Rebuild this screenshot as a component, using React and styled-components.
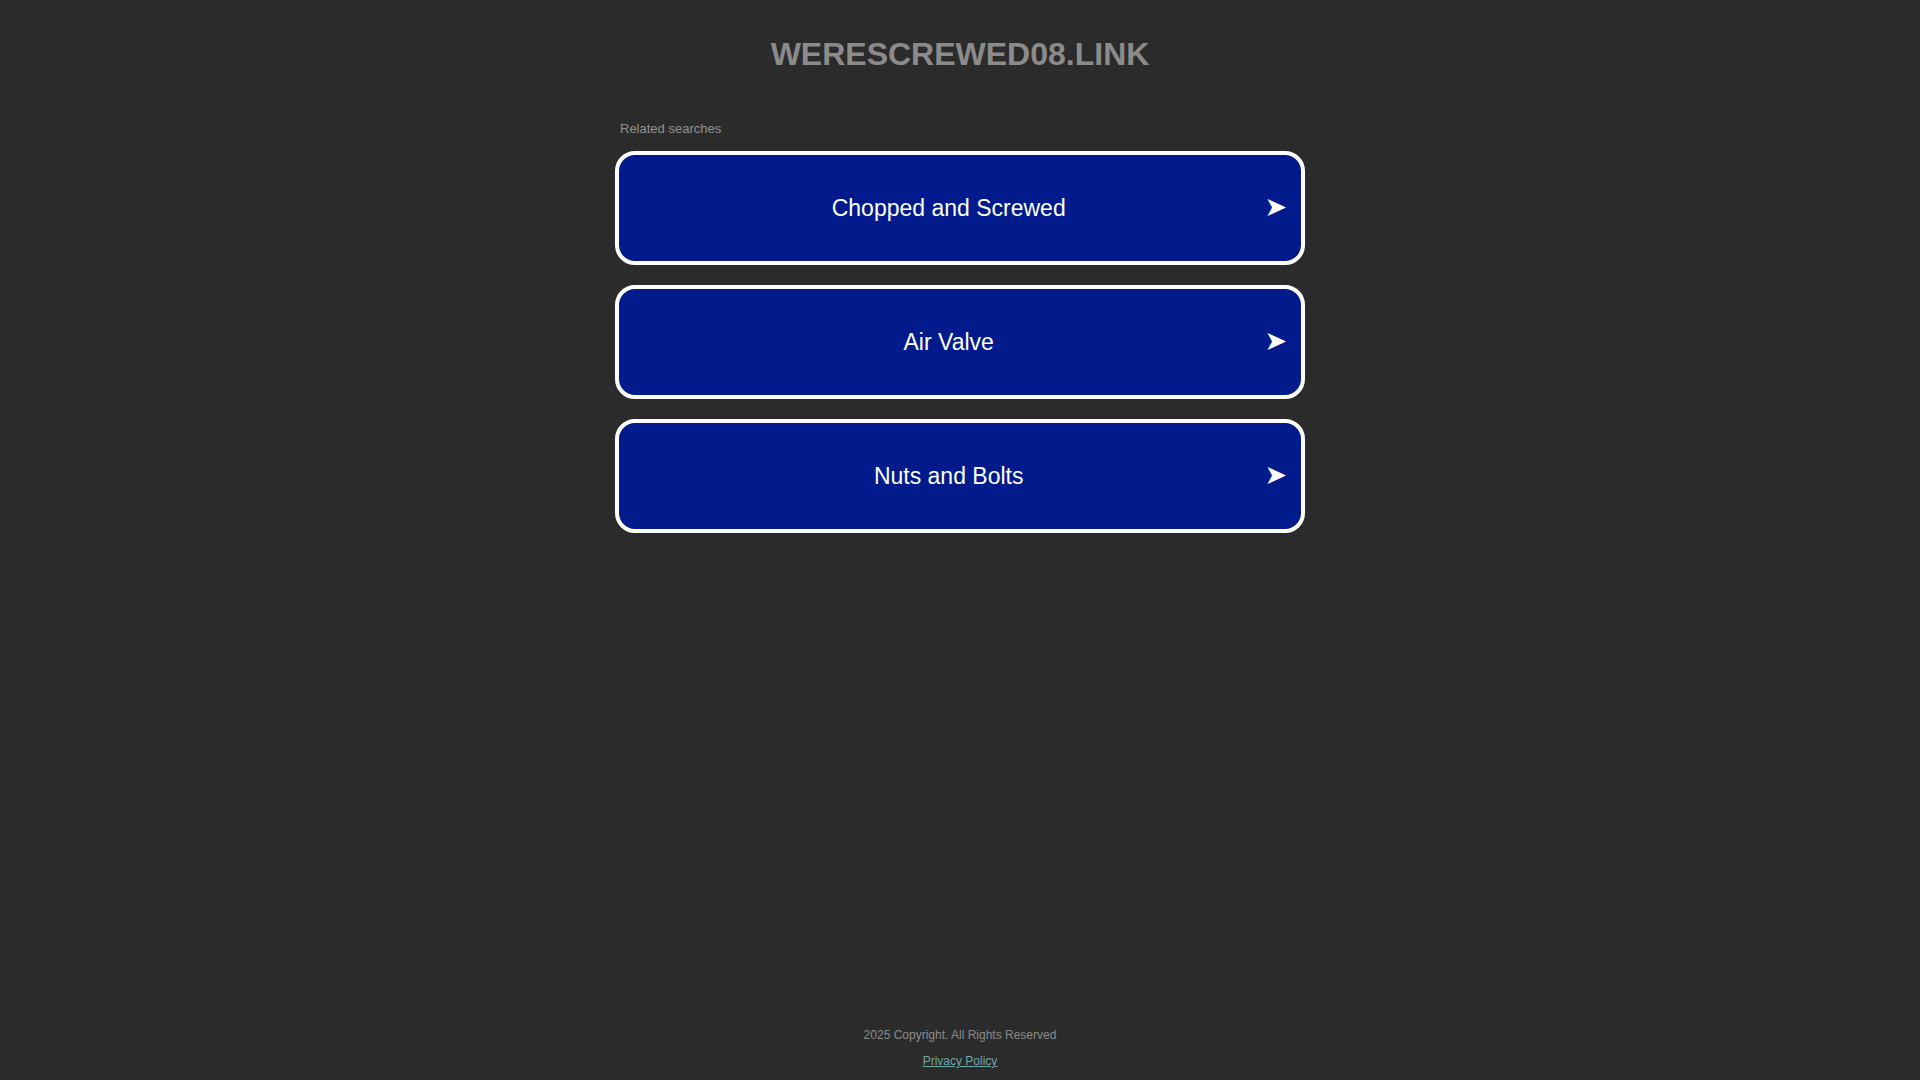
import React from 'react'
import styled, { createGlobalStyle } from 'styled-components'

const GlobalStyle = createGlobalStyle`
    html, body {
        margin: 0;
        padding: 0;
        background-color: #2b2b2b;
    }
    body {
        font-family: "Liberation Sans", Arial, sans-serif;
    }
`

const searches = ['Chopped and Screwed', 'Air Valve', 'Nuts and Bolts']

function App() {
    return (
        <Page>
            <GlobalStyle />
            <Header>
                <Domain>WERESCREWED08.LINK</Domain>
            </Header>
            <Main>
                <Label>Related searches</Label>
                <List>
                    {searches.map((s) => (
                        <Card key={s} href='#'>
                            <CardText>{s}</CardText>
                            <Arrow>➤</Arrow>
                        </Card>
                    ))}
                </List>
            </Main>
            <Footer>
                <Copy>2025 Copyright. All Rights Reserved</Copy>
                <Policy href='#'>Privacy Policy</Policy>
            </Footer>
        </Page>
    )
}

export default App

const Page = styled.div`
    min-height: 100vh;
    display: flex;
    flex-direction: column;
    align-items: center;
`

const Header = styled.header`
    padding-top: 35px;
`

const Domain = styled.h1`
    margin: 0;
    font-size: 32px;
    line-height: 38px;
    font-weight: bold;
    color: #8b8b8b;
    text-align: center;
`

const Main = styled.main`
    width: 690px;
    margin-top: 48px;
    flex: 1;
`

const Label = styled.div`
    font-size: 13px;
    line-height: 15px;
    color: #919191;
    padding-left: 5px;
    margin-bottom: 15px;
`

const List = styled.div`
    display: flex;
    flex-direction: column;
    gap: 20px;
`

const Card = styled.a`
    display: flex;
    align-items: center;
    box-sizing: border-box;
    height: 114px;
    padding: 0 14px 0 14px;
    background-color: #011a8c;
    border: 4px solid #ffffff;
    border-radius: 20px;
    text-decoration: none;
`

const CardText = styled.span`
    flex: 1;
    text-align: center;
    font-size: 23px;
    color: #ffffff;
`

const Arrow = styled.span`
    font-family: "DejaVu Sans", sans-serif;
    font-size: 27px;
    line-height: 1;
    padding-bottom: 3px;
    color: #ffffff;
`

const Footer = styled.footer`
    display: flex;
    flex-direction: column;
    align-items: center;
    gap: 11px;
    padding-bottom: 11px;
    font-size: 12px;
    line-height: 15px;
`

const Copy = styled.div`
    color: #8b8b8b;
`

const Policy = styled.a`
    color: #6ea8a8;
    text-decoration: underline;
`
